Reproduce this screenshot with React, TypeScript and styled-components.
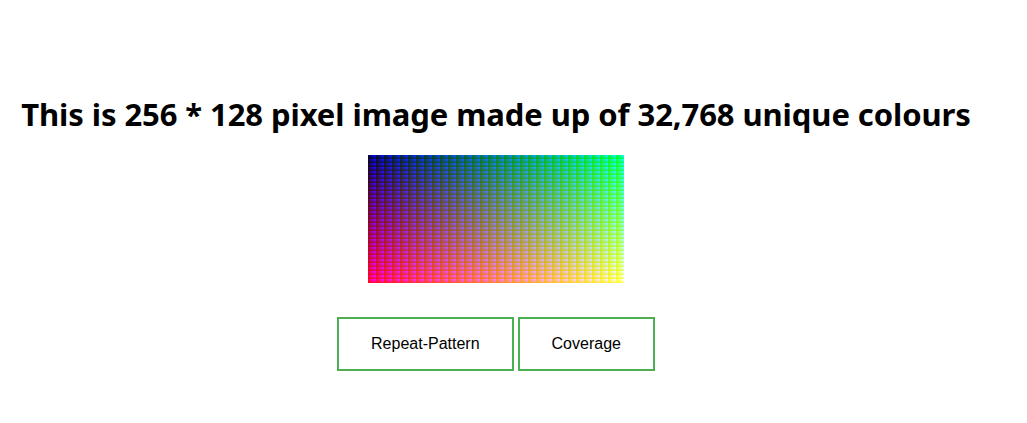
import React, { useEffect, useRef } from "react";
import styled, { createGlobalStyle } from "styled-components";

const GlobalStyle = createGlobalStyle`
  html, body { margin: 0; padding: 0; background: #ffffff; }
`;

const Page = styled.main`
  width: 992px;
  height: 423px;
  overflow: hidden;
  padding-top: 93px;
  box-sizing: border-box;
  display: flex;
  flex-direction: column;
  align-items: center;
`;

const Title = styled.h1`
  margin: 0 0 20px;
  font-family: "Noto Sans", "Open Sans", sans-serif;
  font-size: 31px;
  line-height: 42px;
  font-weight: 700;
  letter-spacing: -0.08px;
  color: #000000;
  white-space: nowrap;
`;

const Picture = styled.canvas`
  display: block;
  width: 256px;
  height: 128px;
`;

const Actions = styled.div`
  display: flex;
  gap: 4px;
  margin-top: 34px;
`;

const ActionButton = styled.button`
  padding: 16px 32px;
  border: 2px solid #4caf50;
  background: #ffffff;
  color: #000000;
  font-family: "Liberation Sans", Arial, sans-serif;
  font-size: 16px;
  line-height: 18px;
`;

function ColourPicture() {
  const ref = useRef<HTMLCanvasElement>(null);
  useEffect(() => {
    const ctx = ref.current?.getContext("2d");
    if (!ctx) return;
    const img = ctx.createImageData(256, 128);
    for (let y = 0; y < 128; y++) {
      for (let x = 0; x < 256; x++) {
        const i = (y * 256 + x) * 4;
        const across = ((x & 7) + 1) / 8;
        const down = (4 - (y & 3)) / 4;
        img.data[i] = (y >> 2) * 8 + 7;
        img.data[i + 1] = (x >> 3) * 8 + 7;
        img.data[i + 2] = Math.round(255 * Math.pow(across * down, 0.7));
        img.data[i + 3] = 255;
      }
    }
    ctx.putImageData(img, 0, 0);
  }, []);
  return <Picture ref={ref} width={256} height={128} />;
}

export default function App() {
  return (
    <Page>
      <GlobalStyle />
      <Title>This is 256 * 128 pixel image made up of 32,768 unique colours</Title>
      <ColourPicture />
      <Actions>
        <ActionButton>Repeat-Pattern</ActionButton>
        <ActionButton>Coverage</ActionButton>
      </Actions>
    </Page>
  );
}
